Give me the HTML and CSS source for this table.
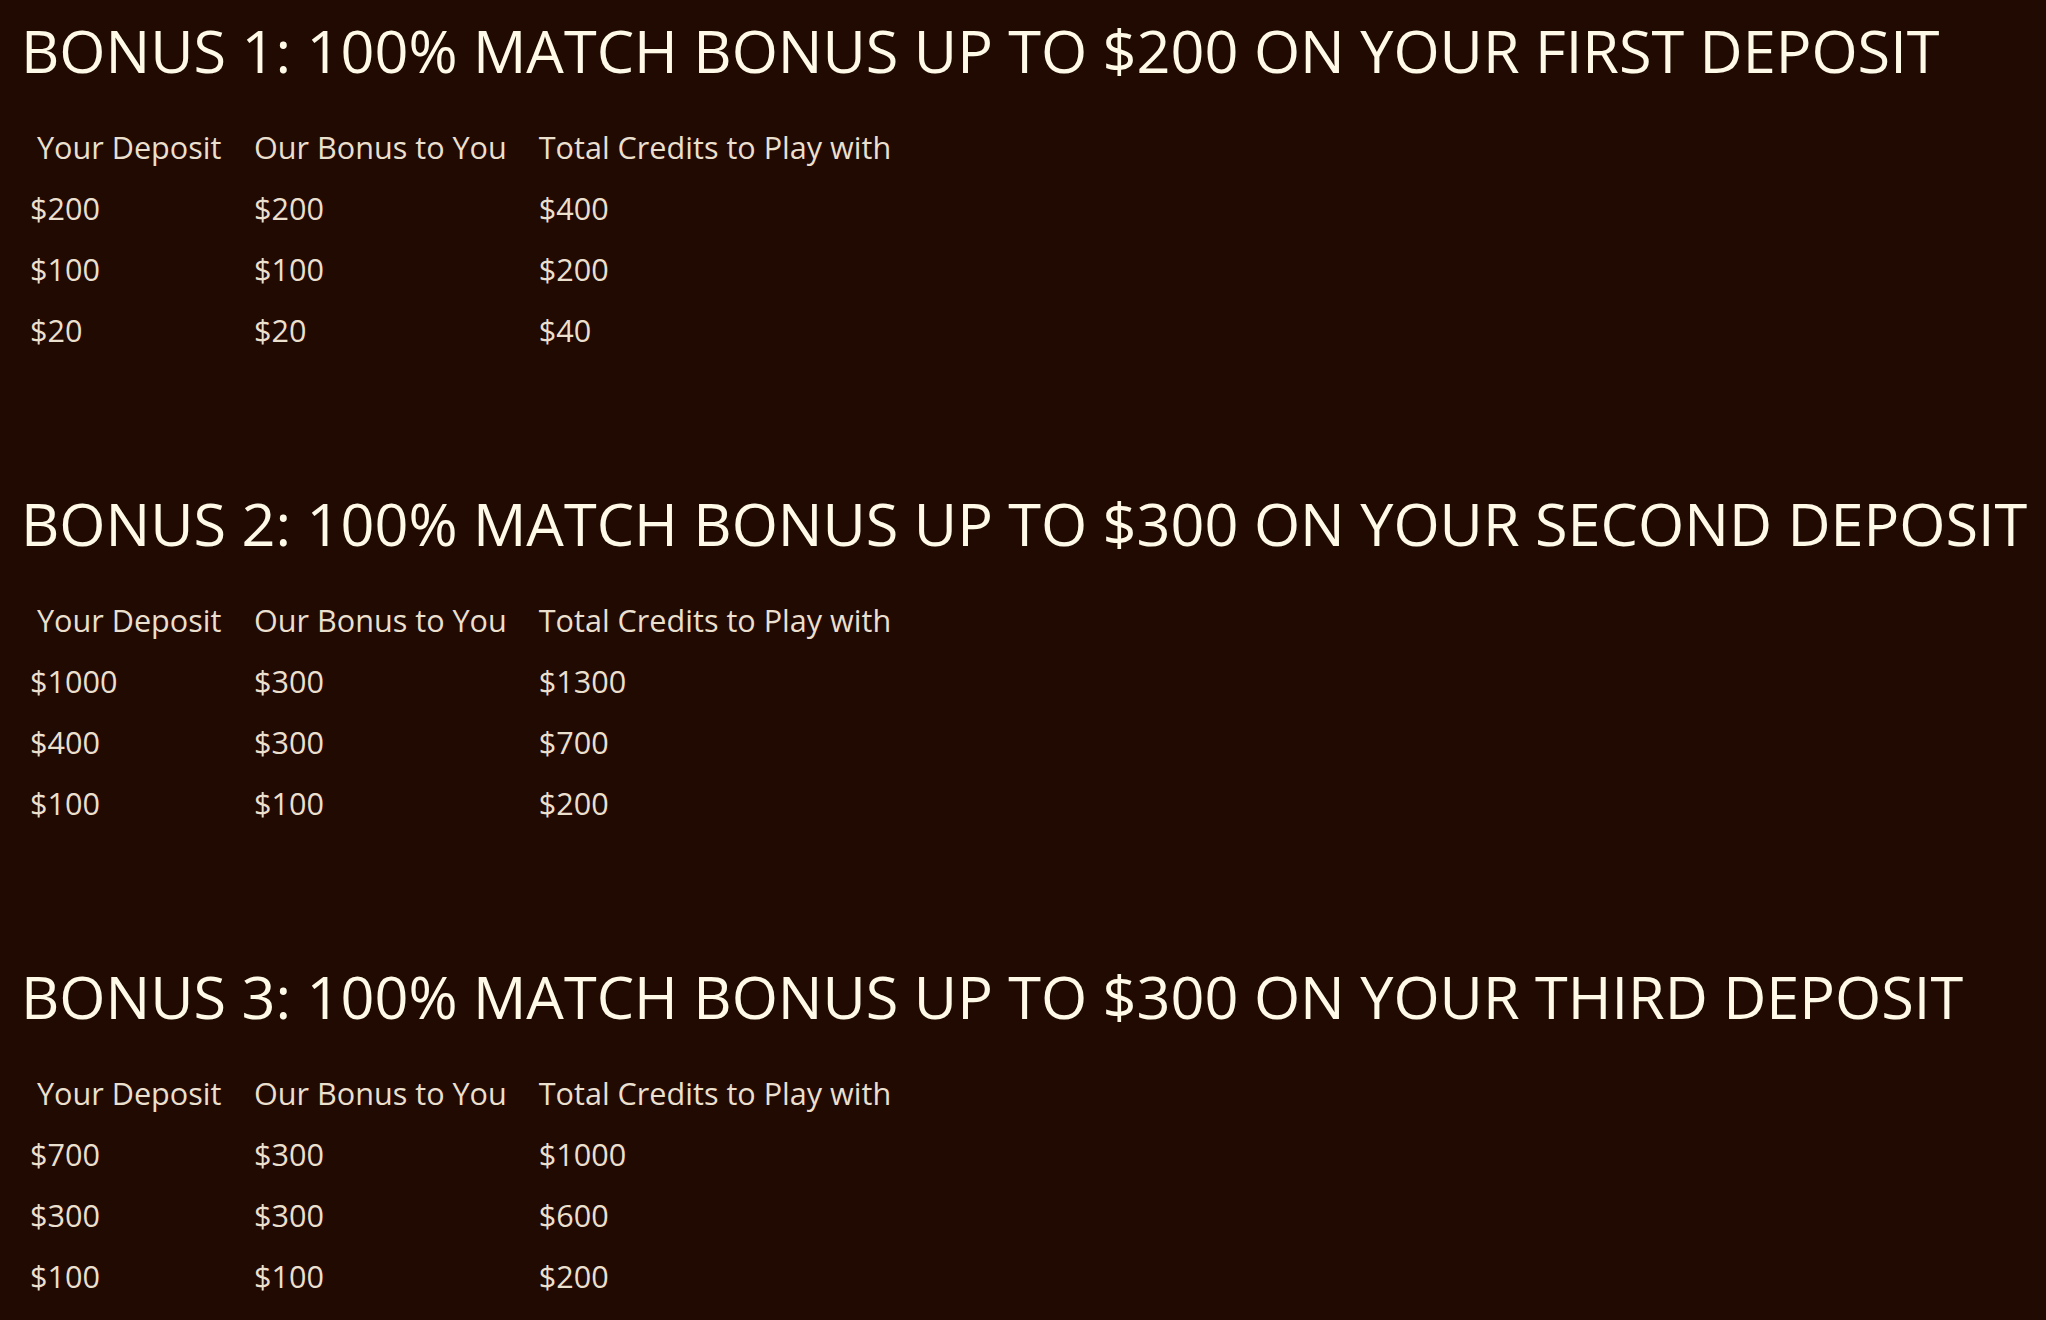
FILE: index.html
```html
<!DOCTYPE html>
<html lang="en">
<head>
    <meta charset="UTF-8">
    <meta name="viewport" content="width=device-width, initial-scale=1.0">
    <title>Welcome Bonus</title>
    <link rel="stylesheet" href="styles.css">
</head>
<body>
    <div class="bonus">
        <h2>BONUS 1: 100% MATCH BONUS UP TO $200 ON YOUR FIRST DEPOSIT</h2>
        <table class="bonus-table">
            <tr>
                <th class="first">Your Deposit</th>
                <th class="second">Our Bonus to You</th>
                <th>Total Credits to Play with</th>
            </tr>
            <tr><td>$200</td><td>$200</td><td>$400</td></tr>
            <tr><td>$100</td><td>$100</td><td>$200</td></tr>
            <tr><td>$20</td><td>$20</td><td>$40</td></tr>
        </table>
    </div>

    <div class="bonus">
        <h2>BONUS 2: 100% MATCH BONUS UP TO $300 ON YOUR SECOND DEPOSIT</h2>
        <table class="bonus-table">
            <tr>
                <th class="first">Your Deposit</th>
                <th class="second">Our Bonus to You</th>
                <th>Total Credits to Play with</th>
            </tr>
            <tr><td>$1000</td><td>$300</td><td>$1300</td></tr>
            <tr><td>$400</td><td>$300</td><td>$700</td></tr>
            <tr><td>$100</td><td>$100</td><td>$200</td></tr>
        </table>
    </div>

    <div class="bonus">
        <h2>BONUS 3: 100% MATCH BONUS UP TO $300 ON YOUR THIRD DEPOSIT</h2>
        <table class="bonus-table">
            <tr>
                <th class="first">Your Deposit</th>
                <th class="second">Our Bonus to You</th>
                <th>Total Credits to Play with</th>
            </tr>
            <tr><td>$700</td><td>$300</td><td>$1000</td></tr>
            <tr><td>$300</td><td>$300</td><td>$600</td></tr>
            <tr><td>$100</td><td>$100</td><td>$200</td></tr>
        </table>
    </div>
</body>
</html>
```

FILE: styles.css
```css
body {
    font-family: 'Open Sans', 'Liberation Sans', sans-serif;
    background-color: #200a02;
    color: #ebdfcd;
    margin: 0;
    padding: 15px 14px 0;
}
.bonus {
    margin-bottom: 127px;
}
.bonus h2 {
    font-size: 59.4px;
    font-weight: 400;
    line-height: 70px;
    color: #fff9e8;
    margin: 0 0 32px 7px;
    white-space: nowrap;
}
.bonus-table {
    border-collapse: collapse;
    font-size: 30.6px;
    line-height: 43px;
}
.bonus-table th, .bonus-table td {
    padding: 9px 16px;
    text-align: left;
    font-weight: 400;
    white-space: nowrap;
}
.bonus-table th.first {
    padding-left: 23px;
    width: 185px;
}
.bonus-table th.second {
    width: 252px;
}
```
